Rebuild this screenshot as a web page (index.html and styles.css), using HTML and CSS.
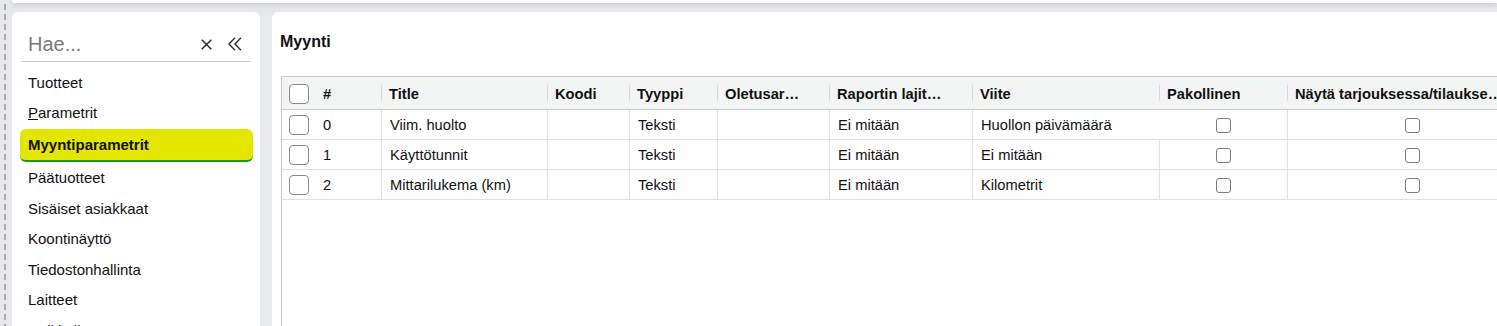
FILE: index.html
```html
<!DOCTYPE html>
<html lang="fi">
<head>
  <meta charset="UTF-8" />
  <meta name="viewport" content="width=device-width, initial-scale=1.0"/>
  <title>Myyntiparametrit</title>
  <link rel="stylesheet" href="styles.css">
</head>
<body>
  <div class="rail"></div>
  <div class="app">
    <div class="topbar"></div>
    <div class="workspace">
      <aside class="sidebar">
        <div class="search">
          <input type="text" class="search-input" placeholder="Hae...">
          <button class="icon-btn" title="Tyhjennä">
            <svg width="11" height="11" viewBox="0 0 11 11"><path d="M0.7 0.7 L10.3 10.3 M10.3 0.7 L0.7 10.3" stroke="#222" stroke-width="1.4" fill="none"/></svg>
          </button>
          <button class="icon-btn" title="Piilota">
            <svg width="14" height="14" viewBox="0 0 14 14"><path d="M7 0.8 L1 7 L7 13.2 M13 0.8 L7 7 L13 13.2" stroke="#2a2f3a" stroke-width="1.4" fill="none"/></svg>
          </button>
        </div>
        <nav class="menu">
          <a class="menu-item" href="#">Tuotteet</a>
          <a class="menu-item" href="#"><u>P</u>arametrit</a>
          <a class="menu-item active" href="#">Myyntiparametrit</a>
          <a class="menu-item" href="#">Päätuotteet</a>
          <a class="menu-item" href="#">Sisäiset asiakkaat</a>
          <a class="menu-item" href="#">Koontinäyttö</a>
          <a class="menu-item" href="#">Tiedostonhallinta</a>
          <a class="menu-item" href="#">Laitteet</a>
          <a class="menu-item" href="#">Artikkelit</a>
        </nav>
      </aside>

      <main class="content">
        <h2 class="content-title">Myynti</h2>
        <div class="grid">
          <table class="grid-table">
            <colgroup>
              <col class="c-chk">
              <col class="c-num">
              <col class="c-title">
              <col class="c-code">
              <col class="c-type">
              <col class="c-default">
              <col class="c-sort">
              <col class="c-ref">
              <col class="c-req">
              <col class="c-show">
            </colgroup>
            <thead>
              <tr>
                <th class="cell-chk"><input type="checkbox" class="check"></th>
                <th>#</th>
                <th class="sep">Title</th>
                <th class="sep">Koodi</th>
                <th class="sep">Tyyppi</th>
                <th class="sep">Oletusar…</th>
                <th class="sep">Raportin lajit…</th>
                <th class="sep">Viite</th>
                <th class="sep">Pakollinen</th>
                <th class="sep">Näytä tarjouksessa/tilaukse…</th>
              </tr>
            </thead>
            <tbody>
              <tr>
                <td class="cell-chk"><input type="checkbox" class="check"></td>
                <td>0</td>
                <td class="line">Viim. huolto</td>
                <td class="line"></td>
                <td class="line">Teksti</td>
                <td class="line"></td>
                <td class="line">Ei mitään</td>
                <td class="line">Huollon päivämäärä</td>
                <td class="cell-center"><input type="checkbox" class="check check-sm"></td>
                <td class="line cell-center"><input type="checkbox" class="check check-sm"></td>
              </tr>
              <tr>
                <td class="cell-chk"><input type="checkbox" class="check"></td>
                <td>1</td>
                <td class="line">Käyttötunnit</td>
                <td class="line"></td>
                <td class="line">Teksti</td>
                <td class="line"></td>
                <td class="line">Ei mitään</td>
                <td class="line">Ei mitään</td>
                <td class="line cell-center"><input type="checkbox" class="check check-sm"></td>
                <td class="line cell-center"><input type="checkbox" class="check check-sm"></td>
              </tr>
              <tr>
                <td class="cell-chk"><input type="checkbox" class="check"></td>
                <td>2</td>
                <td class="line">Mittarilukema (km)</td>
                <td class="line"></td>
                <td class="line">Teksti</td>
                <td class="line"></td>
                <td class="line">Ei mitään</td>
                <td class="line">Kilometrit</td>
                <td class="line cell-center"><input type="checkbox" class="check check-sm"></td>
                <td class="line cell-center"><input type="checkbox" class="check check-sm"></td>
              </tr>
            </tbody>
          </table>
        </div>
      </main>
    </div>
  </div>
</body>
</html>
```

FILE: styles.css
```css
body {
  font-family: 'Liberation Sans', Arial, sans-serif;
  background: #e7e8ec;
  color: #111;
  margin: 0;
  padding: 0;
  display: flex;
  height: 100vh;
  overflow: hidden;
}

.rail {
  width: 12px;
  flex: none;
  background-image: repeating-linear-gradient(to bottom, transparent 0 4px, #a9a9a9 4px 10px);
  background-size: 2px 100%;
  background-position: 4px 0;
  background-repeat: no-repeat;
}

.app {
  flex: 1;
  min-width: 0;
  display: flex;
  flex-direction: column;
}

.topbar {
  height: 3px;
  flex: none;
  background-color: white;
  border-radius: 0 0 0 6px;
  box-shadow: 0 2px 5px rgba(0,0,0,0.18);
}

.workspace {
  flex: 1;
  min-height: 0;
  display: flex;
  gap: 12px;
  margin-top: 9px;
}

/* sidebar */

.sidebar {
  width: 248px;
  flex: none;
  box-sizing: border-box;
  background-color: white;
  border-radius: 6px 6px 0 0;
  padding: 0 7px 0 8px;
}

.search {
  display: flex;
  align-items: center;
  margin: 0 2px 0 1px;
  padding: 17px 6px 2px 0;
  border-bottom: 1px solid #cfcfcf;
}

.search-input {
  flex: 1;
  min-width: 0;
  height: 30px;
  border: none;
  outline: none;
  padding: 0 0 0 7px;
  font-family: inherit;
  font-size: 20px;
  color: #222;
  background: transparent;
}

.search-input::placeholder {
  color: #7b7b7b;
}

.icon-btn {
  width: 20px;
  height: 20px;
  margin-left: 9px;
  padding: 0;
  border: none;
  background: none;
  display: grid;
  place-items: center;
  cursor: pointer;
}

.menu {
  display: flex;
  flex-direction: column;
  padding-top: 5.75px;
}

.menu-item {
  display: block;
  padding: 6px 8px;
  line-height: 18.5px;
  font-size: 15px;
  color: #111;
  text-decoration: none;
  white-space: nowrap;
}

.menu-item.active {
  margin: 0.5px 0 1px;
  padding: 7px 8px 5.5px;
  font-weight: bold;
  background-color: #e4e600;
  border-bottom: 2px solid #1b991b;
  border-radius: 6px;
}

/* main content */

.content {
  flex: 1;
  min-width: 0;
  display: flex;
  flex-direction: column;
  overflow: hidden;
  background-color: white;
  border-radius: 6px 0 0 0;
  padding-left: 8px;
}

.content-title {
  margin: 0;
  padding-top: 21px;
  font-size: 16px;
  line-height: 18px;
  font-weight: bold;
}

.grid {
  flex: 1;
  margin: 25px 0 0 1px;
  border-left: 1px solid #c6cacd;
  border-top: 1px solid #c6cacd;
}

.grid-table {
  table-layout: fixed;
  width: 1254px;
  border-collapse: separate;
  border-spacing: 0;
  font-size: 14.7px;
}

.c-chk { width: 33px; }
.c-num { width: 66px; }
.c-title { width: 166px; }
.c-code { width: 82px; }
.c-type { width: 88px; }
.c-default { width: 112px; }
.c-sort { width: 143px; }
.c-ref { width: 187px; }
.c-req { width: 128px; }
.c-show { width: 249px; }

.grid-table th,
.grid-table td {
  padding: 0 8px;
  text-align: left;
  white-space: nowrap;
  overflow: hidden;
}

.grid-table th {
  position: relative;
  height: 30px;
  padding-top: 2px;
  background-color: #f3f5f5;
  border-bottom: 1px solid #c9cdd0;
  font-weight: bold;
}

.grid-table th.sep::before {
  content: "";
  position: absolute;
  left: 0;
  top: 8px;
  bottom: 8px;
  width: 1px;
  background-color: #d9dbde;
}

.grid-table td {
  height: 28px;
  padding-top: 1px;
  border-bottom: 1px solid #dfe1e4;
}

.grid-table td.line {
  border-left: 1px solid #dfe1e4;
}

.grid-table .cell-chk {
  padding-left: 7px;
  padding-right: 0;
}

.grid-table td.cell-chk {
  padding-top: 0;
  height: 29px;
}

.grid-table .cell-center {
  text-align: center;
}

.check {
  appearance: none;
  -webkit-appearance: none;
  display: block;
  box-sizing: border-box;
  width: 20px;
  height: 20px;
  margin: 0;
  border: 1.5px solid #8a8a8a;
  border-radius: 4px;
  background-color: white;
}

.check-sm {
  width: 15px;
  height: 15px;
  margin: 0 auto;
  border-color: #7c7c7c;
  border-radius: 3px;
}
```
